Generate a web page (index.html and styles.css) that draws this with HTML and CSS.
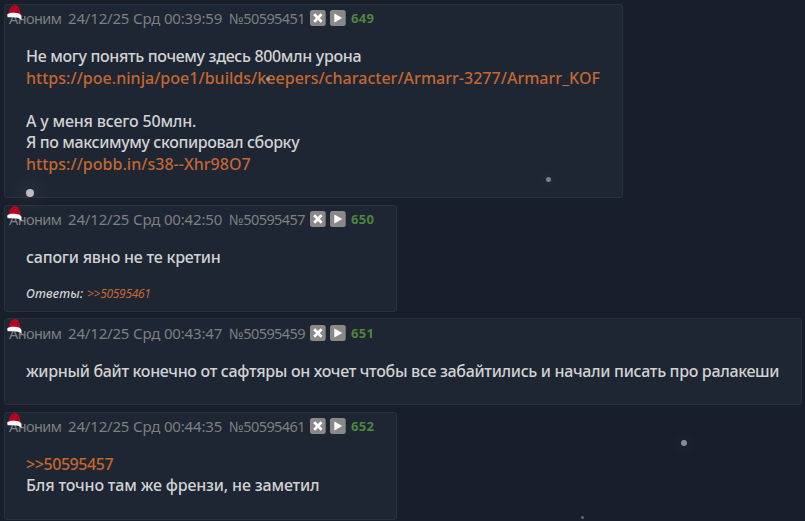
FILE: index.html
```html
<!DOCTYPE html>
<html lang="ru">
<head>
<meta charset="utf-8">
<title>Тред</title>
<link rel="stylesheet" href="styles.css">
</head>
<body>
<svg class="defs" width="0" height="0">
  <symbol id="hat" viewBox="0 0 15 15">
    <path d="M1.500 9.500C2.300 5 3.800.3 8 .1c3.600 0 5 3.900 5.600 10z" fill="#bb0420"/>
    <path d="M5 5.500C5.600 3 6.700 2 8 1.800M10 3l.9 5" stroke="#850619" stroke-width=".8" fill="none"/>
    <path d="M.1 9.800C1 8 4 7.600 7.500 7.700c3.500 0 6 1.300 6.900 2.800l.2 4.400-2.500-2C8.500 11.700 4 12.300.6 12.200z" fill="#f8f6f7"/>
  </symbol>
  <symbol id="hide" viewBox="0 0 16 16">
    <rect width="15.700" height="16" rx="2.500" fill="#8a8988"/>
    <path d="M4.200 4.300l7.400 7.400M11.600 4.300l-7.400 7.400" stroke="#fff" stroke-width="2.700"/>
  </symbol>
  <symbol id="play" viewBox="0 0 16 16">
    <rect width="15.700" height="16" rx="2.500" fill="#8a8988"/>
    <path d="M4.300 3.600L12.300 8l-8 4.400z" fill="#fff"/>
  </symbol>
</svg>
<main class="thread">
  <article class="post post-a">
    <svg class="hat"><use href="#hat"/></svg>
    <header class="head"><span class="name">Аноним</span><span class="date">24/12/25 Срд 00:39:59</span><span class="num">№50595451</span><svg class="btn"><use href="#hide"/></svg><svg class="btn"><use href="#play"/></svg><span class="order">649</span></header>
    <div class="msg">
      <p class="t1">Не могу понять почему здесь 800млн урона</p>
      <p class="url"><a>https://poe.ninja/poe1/builds/keepers/character/Armarr-3277/Armarr_KOF</a></p>
      <p>&nbsp;</p>
      <p class="t2">А у меня всего 50млн.</p>
      <p class="t3">Я по максимуму скопировал сборку</p>
      <p class="url"><a>https://pobb.in/s38--Xhr98O7</a></p>
    </div>
  </article>
  <article class="post post-b">
    <svg class="hat"><use href="#hat"/></svg>
    <header class="head"><span class="name">Аноним</span><span class="date">24/12/25 Срд 00:42:50</span><span class="num">№50595457</span><svg class="btn"><use href="#hide"/></svg><svg class="btn"><use href="#play"/></svg><span class="order">650</span></header>
    <div class="msg"><p class="t4">сапоги явно не те кретин</p></div>
    <div class="replies"><span class="label">Ответы:</span><a>&gt;&gt;50595461</a></div>
  </article>
  <article class="post post-c">
    <svg class="hat"><use href="#hat"/></svg>
    <header class="head"><span class="name">Аноним</span><span class="date">24/12/25 Срд 00:43:47</span><span class="num">№50595459</span><svg class="btn"><use href="#hide"/></svg><svg class="btn"><use href="#play"/></svg><span class="order">651</span></header>
    <div class="msg"><p class="t5">жирный байт конечно от сафтяры он хочет чтобы все забайтились и начали писать про ралакеши</p></div>
  </article>
  <article class="post post-d">
    <svg class="hat"><use href="#hat"/></svg>
    <header class="head"><span class="name">Аноним</span><span class="date">24/12/25 Срд 00:44:35</span><span class="num">№50595461</span><svg class="btn"><use href="#hide"/></svg><svg class="btn"><use href="#play"/></svg><span class="order">652</span></header>
    <div class="msg">
      <p class="t6"><a>&gt;&gt;50595457</a></p>
      <p class="t7">Бля точно там же френзи, не заметил</p>
    </div>
  </article>
</main>
<i class="snow s1"></i><i class="snow s2"></i><i class="snow s3"></i><i class="snow s4"></i><i class="snow s5"></i>
</body>
</html>
```
FILE: styles.css
```css
* { box-sizing: border-box; }
html { background: #181f2a; }
body {
  margin: 0;
  height: 521px;
  overflow: hidden;
  position: relative;
  color: #d2d2d2;
  font: 500 16px/21.6px "Noto Sans", sans-serif;
}
.defs { position: absolute; }
.thread {
  display: flex;
  flex-direction: column;
  align-items: flex-start;
  padding: 4px 0 0 4px;
}
.post {
  position: relative;
  flex: none;
  padding: 3px 0 0 4px;
  background: #1e2634;
  border: 1px solid #27323f;
  border-radius: 3px;
  white-space: nowrap;
}
.post-a { width: 619px; height: 194px; margin-bottom: 7px; }
.post-b { width: 393px; height: 107px; margin-bottom: 6px; }
.post-c { width: 798px; height: 87px; margin-bottom: 7px; padding-top: 4px; }
.post-d { width: 393px; height: 108px; }
.hat { position: absolute; left: 2px; top: 0; width: 15px; height: 15px; }
.head {
  display: flex;
  height: 20px;
  align-items: center;
  color: #7d7f80;
  font-size: 15px;
  font-weight: 400;
  line-height: 20px;
}
.name { width: 59px; font-size: 14.500px; letter-spacing: -.6px; }
.date { width: 161px; letter-spacing: -.17px; }
.num { width: 81px; font-size: 14.500px; letter-spacing: -.57px; }
.btn { width: 16px; height: 16px; margin-right: 4px; }
.order { margin-left: 1px; color: #4f8440; font-size: 13px; font-weight: 700; letter-spacing: .3px; }
.msg { padding: 18px 0 0 17px; }
.post-d .msg { line-height: 21px; }
p { margin: 0; }
a { color: #c3662f; }
.url { letter-spacing: .025px; }
.t1 { letter-spacing: -.34px; }
.t2 { letter-spacing: -.18px; }
.t3 { letter-spacing: -.38px; }
.t4 { letter-spacing: -.21px; }
.t5 { letter-spacing: -.32px; }
.t6 { letter-spacing: -.43px; }
.t7 { letter-spacing: -.16px; }
.replies {
  display: flex;
  padding: 16px 0 0 17px;
  font-size: 12px;
  font-style: italic;
  line-height: 18px;
}
.label { width: 61px; font-size: 12.500px; letter-spacing: .15px; }
.replies a { font-weight: 400; letter-spacing: -.3px; }
.snow { position: absolute; border-radius: 50%; }
.s1 { left: 26px; top: 189px; width: 8px; height: 8px; background: #bcbec3; box-shadow: 0 0 20px 8px rgba(255,255,255,.05); }
.s2 { left: 546px; top: 177px; width: 5px; height: 5px; background: #78808a; box-shadow: 0 0 12px 6px rgba(255,255,255,.02); }
.s3 { left: 681px; top: 440px; width: 6px; height: 6px; background: #898b93; box-shadow: 0 0 16px 8px rgba(255,255,255,.025); }
.s4 { left: 581px; top: 516px; width: 3px; height: 3px; background: #646a72; }
.s5 { left: 266px; top: 77px; width: 4px; height: 4px; background: #a9998f; box-shadow: 0 0 10px 5px rgba(255,255,255,.02); }
```
